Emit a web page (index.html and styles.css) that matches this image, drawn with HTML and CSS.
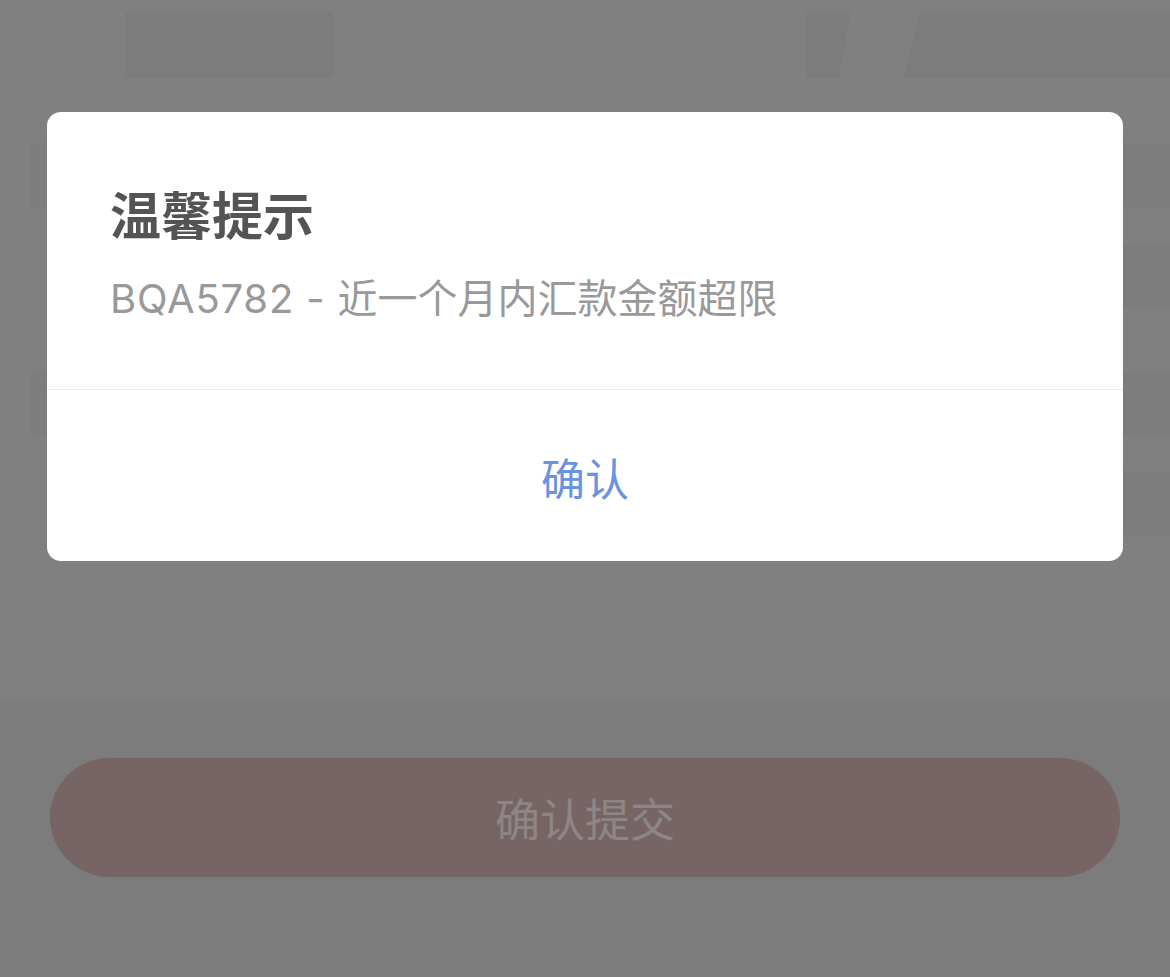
FILE: index.html
```html
<!DOCTYPE html>
<html lang="zh-CN">
<head>
<meta charset="utf-8">
<title>温馨提示</title>
<link rel="stylesheet" href="styles.css">
</head>
<body>
<div class="page">
  <div class="tabs">
    <div class="tab tab-a"></div>
    <div class="tab-spacer"></div>
    <div class="tab tab-b"></div>
    <div class="tab tab-c"></div>
  </div>
  <div class="form">
    <div class="row row-left"></div>
    <div class="row row-right"></div>
    <div class="row row-left"></div>
    <div class="row row-right"></div>
  </div>
  <div class="footer">
    <div class="submit">确认提交</div>
  </div>
</div>
<div class="dialog">
  <div class="dialog-body">
    <div class="dialog-title">温馨提示</div>
    <div class="dialog-msg"><span class="code">BQA5782 - </span>近一个月内汇款金额超限</div>
  </div>
  <div class="dialog-foot">确认</div>
</div>
</body>
</html>
```
FILE: styles.css
```css
html, body {
  margin: 0;
  padding: 0;
}
body {
  width: 1170px;
  height: 977px;
  overflow: hidden;
  background: #808080;
  font-family: "Inter", "Noto Sans CJK SC", sans-serif;
  position: relative;
}
.page {
  display: flex;
  flex-direction: column;
  height: 977px;
}
.tabs {
  display: flex;
  margin-top: 12px;
  height: 66px;
  padding-left: 125px;
}
.tab {
  background: #7c7c7c;
  height: 66px;
}
.tab-a {
  width: 208px;
}
.tab-spacer {
  width: 473px;
}
.tab-b {
  width: 45px;
  clip-path: polygon(0 0, 100% 0, 73% 100%, 0 100%);
}
.tab-c {
  width: 267px;
  margin-left: 52px;
  clip-path: polygon(6% 0, 100% 0, 100% 100%, 0 100%);
}
.form {
  display: flex;
  flex-direction: column;
  padding-top: 65px;
  gap: 36px;
}
.row {
  height: 64px;
  background: #7d7d7d;
}
.row-left {
  margin-left: 30px;
}
.row-right {
  margin-left: 0;
  background: linear-gradient(90deg, #808080 0, #808080 1123px, #7d7d7d 1123px);
}
.form .row:nth-child(3) {
  margin-top: 28px;
}
.footer {
  margin-top: 164px;
  flex: 1;
  background: #7c7c7c;
  padding-top: 59px;
}
.submit {
  margin: 0 50px;
  height: 119px;
  border-radius: 60px;
  background: #776565;
  color: #8e8686;
  font-family: "Noto Sans CJK SC", sans-serif;
  font-size: 45px;
  display: flex;
  align-items: center;
  justify-content: center;
}
.dialog {
  position: absolute;
  left: 47px;
  top: 112px;
  width: 1076px;
  height: 449px;
  background: #ffffff;
  border-radius: 14px;
  display: flex;
  flex-direction: column;
}
.dialog-body {
  padding: 66px 63px 0;
  height: 278px;
  box-sizing: border-box;
  border-bottom: 1px solid #ececec;
}
.dialog-title {
  font-family: "Noto Sans CJK SC", sans-serif;
  font-weight: 700;
  font-size: 51px;
  line-height: 70px;
  color: #545454;
}
.dialog-msg {
  margin-top: 23px;
  font-size: 40px;
  line-height: 56px;
  color: #999999;
}
.code {
  letter-spacing: 0.8px;
}
.dialog-foot {
  flex: 1;
  display: flex;
  align-items: center;
  justify-content: center;
  font-family: "Noto Sans CJK SC", sans-serif;
  font-size: 44px;
  color: #6a93df;
  padding-top: 2px;
}
```
